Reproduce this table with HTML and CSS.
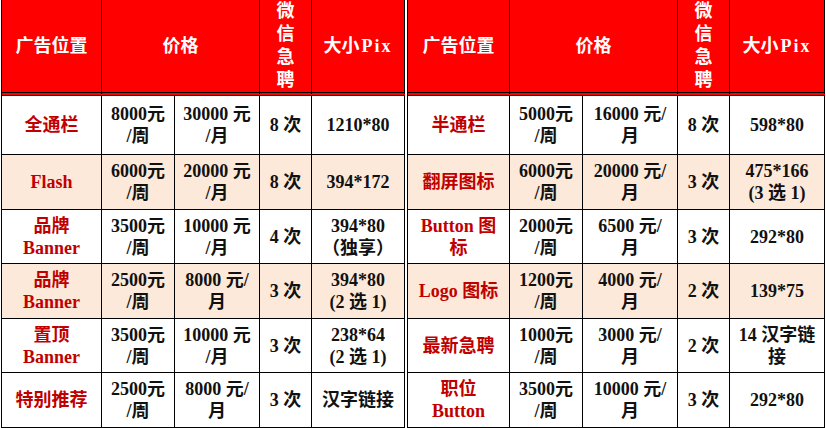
FILE: index.html
```html
<!DOCTYPE html>
<html lang="zh-CN">
<head>
<meta charset="utf-8">
<title>广告价格</title>
<link rel="stylesheet" href="styles.css">
</head>
<body>
<div class="sheet">
  <table class="price left">
    <colgroup>
      <col class="c-pos-l"><col class="c-week"><col class="c-month-l"><col class="c-wx"><col class="c-size-l">
    </colgroup>
    <thead>
      <tr>
        <th>广告位置</th>
        <th colspan="2">价格</th>
        <th class="wx">微<br>信<br>急<br>聘</th>
        <th>大小<span class="pix">Pix</span></th>
      </tr>
    </thead>
    <tbody>
      <tr class="r1">
        <td class="pos">全通栏</td>
        <td>8000元<br>/周</td>
        <td>30000 元<br>/月</td>
        <td>8 次</td>
        <td>1210*80</td>
      </tr>
      <tr class="r2 alt">
        <td class="pos">Flash</td>
        <td>6000元<br>/周</td>
        <td>20000 元<br>/月</td>
        <td>8 次</td>
        <td>394*172</td>
      </tr>
      <tr class="r3">
        <td class="pos">品牌<br>Banner</td>
        <td>3500元<br>/周</td>
        <td>10000 元<br>/月</td>
        <td>4 次</td>
        <td>394*80<br>（独享）</td>
      </tr>
      <tr class="r4 alt">
        <td class="pos">品牌<br>Banner</td>
        <td>2500元<br>/周</td>
        <td>8000 元/<br>月</td>
        <td>3 次</td>
        <td>394*80<br>(2 选 1)</td>
      </tr>
      <tr class="r5">
        <td class="pos">置顶<br>Banner</td>
        <td>3500元<br>/周</td>
        <td>10000 元<br>/月</td>
        <td>3 次</td>
        <td>238*64<br>(2 选 1)</td>
      </tr>
      <tr class="r6">
        <td class="pos">特别推荐</td>
        <td>2500元<br>/周</td>
        <td>8000 元/<br>月</td>
        <td>3 次</td>
        <td>汉字链接</td>
      </tr>
    </tbody>
  </table>

  <table class="price right">
    <colgroup>
      <col class="c-pos-r"><col class="c-week"><col class="c-month-r"><col class="c-wx"><col class="c-size-r">
    </colgroup>
    <thead>
      <tr>
        <th>广告位置</th>
        <th colspan="2">价格</th>
        <th class="wx">微<br>信<br>急<br>聘</th>
        <th>大小<span class="pix">Pix</span></th>
      </tr>
    </thead>
    <tbody>
      <tr class="r1">
        <td class="pos">半通栏</td>
        <td>5000元<br>/周</td>
        <td>16000 元/<br>月</td>
        <td>8 次</td>
        <td>598*80</td>
      </tr>
      <tr class="r2 alt">
        <td class="pos">翻屏图标</td>
        <td>6000元<br>/周</td>
        <td>20000 元/<br>月</td>
        <td>3 次</td>
        <td>475*166<br>(3 选 1)</td>
      </tr>
      <tr class="r3">
        <td class="pos">Button 图<br>标</td>
        <td>2000元<br>/周</td>
        <td>6500 元/<br>月</td>
        <td>3 次</td>
        <td>292*80</td>
      </tr>
      <tr class="r4 alt">
        <td class="pos">Logo 图标</td>
        <td>1200元<br>/周</td>
        <td>4000 元/<br>月</td>
        <td>2 次</td>
        <td>139*75</td>
      </tr>
      <tr class="r5">
        <td class="pos">最新急聘</td>
        <td>1000元<br>/周</td>
        <td>3000 元/<br>月</td>
        <td>2 次</td>
        <td>14 汉字链<br>接</td>
      </tr>
      <tr class="r6">
        <td class="pos">职位<br>Button</td>
        <td>3500元<br>/周</td>
        <td>10000 元/<br>月</td>
        <td>3 次</td>
        <td>292*80</td>
      </tr>
    </tbody>
  </table>
</div>
</body>
</html>
```

FILE: styles.css
```css
html, body {
  margin: 0;
  padding: 0;
  background: #ffffff;
}

.sheet {
  display: flex;
  align-items: flex-start;
  gap: 2px;
  padding-left: 1px;
}

.price {
  border-collapse: separate;
  border-spacing: 0;
  table-layout: fixed;
  border-left: 1px solid #000;
  font-family: "Liberation Serif", "Noto Sans CJK SC", serif;
  font-size: 18px;
  font-weight: 700;
  line-height: 22px;
  color: #111;
}

.left { width: 404px; }
.right { width: 418px; }

.c-pos-l { width: 100px; }
.c-pos-r { width: 102px; }
.c-week { width: 73px; }
.c-month-l { width: 85px; }
.c-month-r { width: 95px; }
.c-wx { width: 52px; }
.c-size-l { width: 93px; }
.c-size-r { width: 95px; }

.price th,
.price td {
  box-sizing: border-box;
  padding: 0 2px;
  text-align: center;
  vertical-align: middle;
  border-right: 1px solid #000;
  border-bottom: 1px solid #000;
  overflow: hidden;
  white-space: nowrap;
}

.price th {
  height: 94px;
  background: #ff0000;
  color: #ffffff;
  font-weight: 700;
  border-bottom: 4px double #000;
  white-space: nowrap;
}

.price th.wx {
  line-height: 23px;
  overflow: visible;
}

.pix {
  letter-spacing: 2px;
  margin-left: 2px;
}

.price td.pos {
  color: #c00000;
}

.price tr.alt td {
  background: #fde9d9;
}

.r1 td { height: 59px; }
.r2 td { height: 55px; }
.r3 td { height: 54px; }
.r4 td { height: 55px; }
.r5 td { height: 54px; }
.r6 td { height: 55px; }
```
